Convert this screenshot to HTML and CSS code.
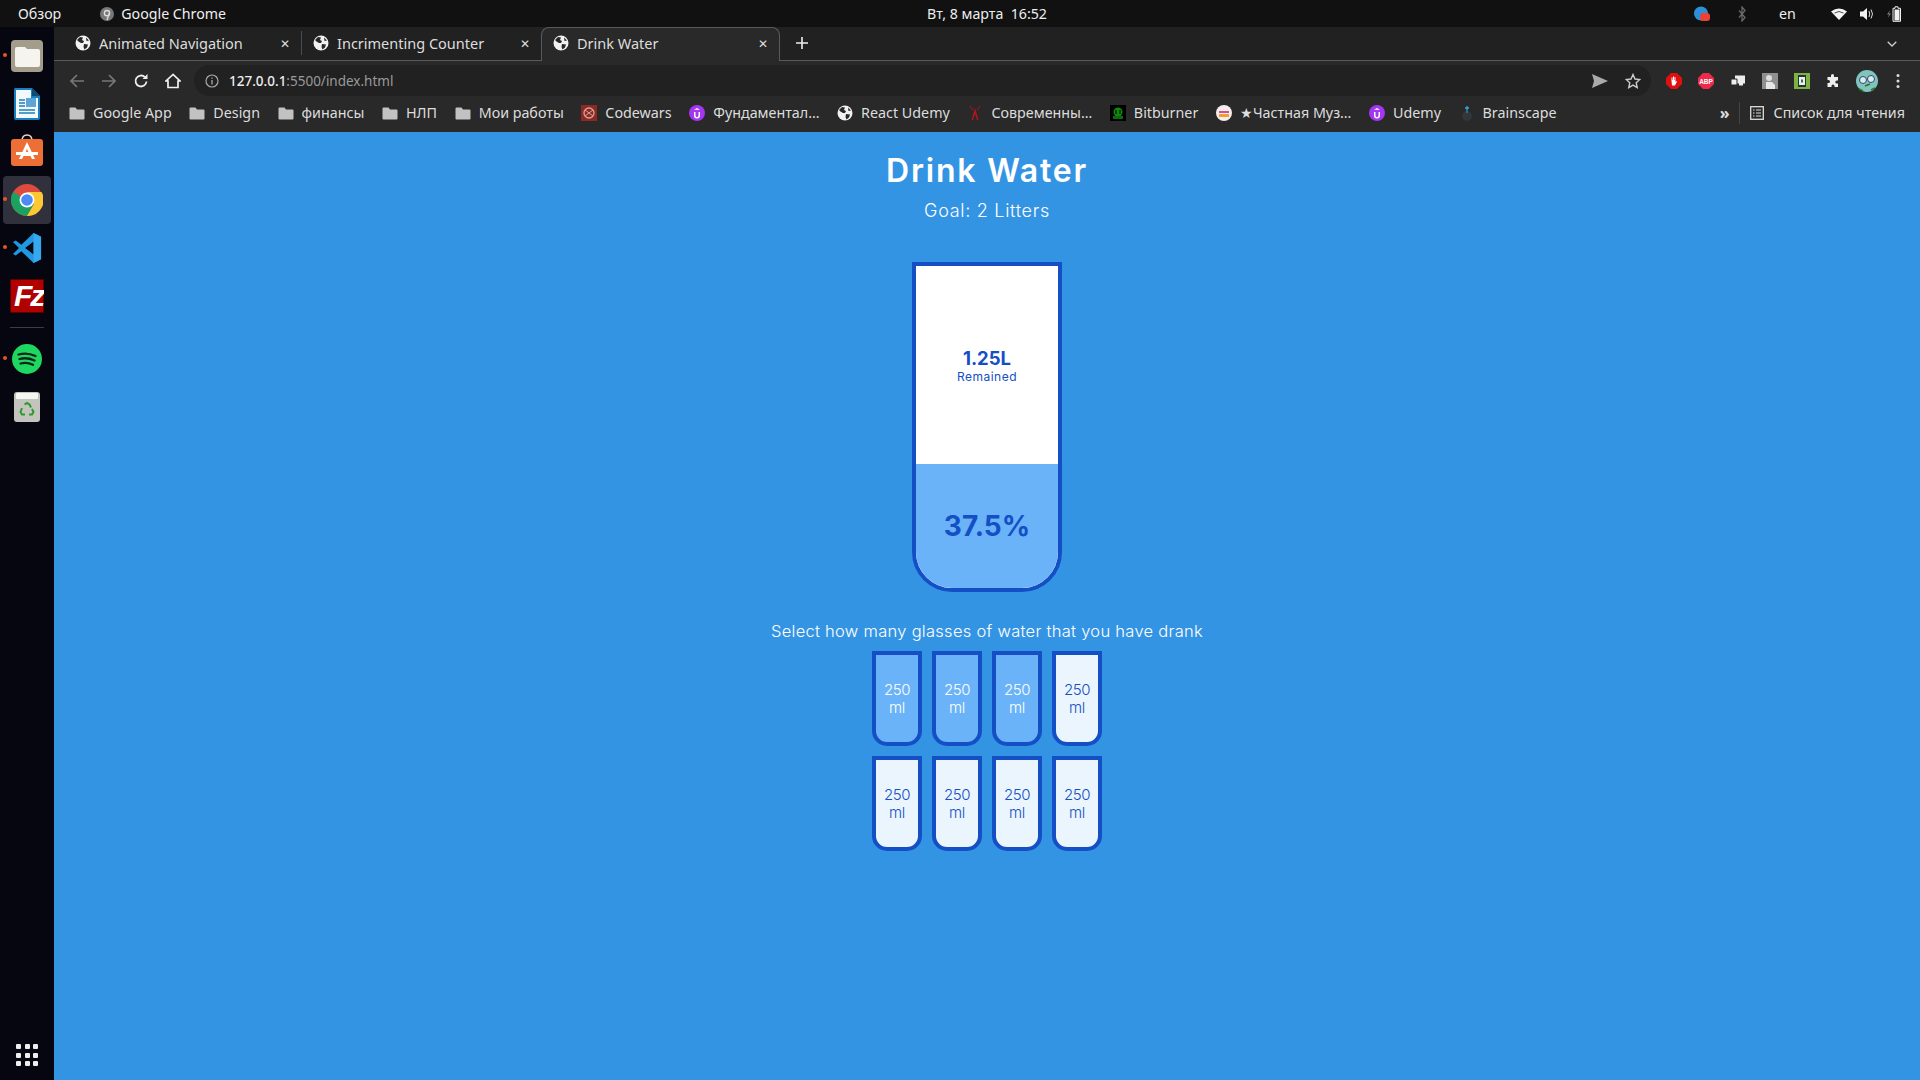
FILE: index.html
```html
<!DOCTYPE html>
<html lang="ru">
<head>
  <meta charset="UTF-8">
  <title>Drink Water</title>
  <link rel="stylesheet" href="styles.css">
</head>
<body>
  <svg class="defs" width="0" height="0">
    <symbol id="globe" viewBox="0 0 16 16">
      <circle cx="8" cy="8" r="7.5" fill="#f1f1f1"/>
      <path d="M2 5l3-3 3 .5-1 2.500 2 1-1 2H6L3.500 6.500zM9 9l4 .5-1 3-2.500 2-1-2.500zM11 2.500l3 3-2.500.5z" fill="#26272a"/>
    </symbol>
    <symbol id="folder" viewBox="0 0 16 16">
      <path d="M1 2.500h5.500L8 4.500h6.500a1 1 0 0 1 1 1v8a1 1 0 0 1-1 1h-13a1 1 0 0 1-1-1v-10a1 1 0 0 1 1-1z" fill="#c2c2c2"/>
    </symbol>
    <symbol id="udemy" viewBox="0 0 16 16">
      <circle cx="8" cy="8" r="8" fill="#a435f0"/>
      <path d="M5 7v3.500a3 3 0 0 0 6 0V7h-1.500v3.500a1.500 1.500 0 0 1-3 0V7zM8 3l3 1.800H5z" fill="#fff"/>
    </symbol>
  </svg>

  <header class="topbar">
    <span class="top-item">Обзор</span>
    <span class="top-app">
      <svg class="ic14" viewBox="0 0 16 16"><circle cx="8" cy="8" r="8" fill="#77787a"/><circle cx="8" cy="7" r="3" fill="none" stroke="#ddd" stroke-width="1.500"/><path d="M10.500 7.500L8 15" stroke="#ddd" stroke-width="1.500"/></svg>
      Google Chrome
    </span>
    <span class="top-date">Вт, 8 марта&nbsp; 16:52</span>
    <div class="tray">
      <svg class="tray-blob" viewBox="0 0 16 16"><circle cx="7" cy="7.500" r="7" fill="#2b90d9"/><rect x="6" y="7" width="10" height="8" rx="3" fill="#ea4335"/></svg>
      <svg class="tray-bt" viewBox="0 0 8 16"><path d="M1 4.500l6 7L4 15V1l3 3.500-6 7" fill="none" stroke="#66686b" stroke-width="1.300"/></svg>
      <span class="tray-lang">en</span>
      <svg class="tray-wifi" viewBox="0 0 16 12"><path d="M0 3.500Q8-2.500 16 3.500L8 12z" fill="#f5f5f5"/><path d="M3.500 5Q8 2 12.500 5" stroke="#222" fill="none" stroke-width=".8"/></svg>
      <svg class="tray-vol" viewBox="0 0 14 14"><path d="M0 4.500h3L7 1v12L3 9.500H0z" fill="#f2f2f2"/><path d="M9 4q1.500 3 0 6M11 2.500q3 4.500 0 9" stroke="#ddd" fill="none"/></svg>
      <svg class="tray-bat" viewBox="0 0 15 16"><path d="M3 4L0 8.500h2L1 12l3-4.500H2z" fill="#777"/><path d="M8 .8h3v1.500h2.500v13H6v-13H8z" fill="none" stroke="#f2f2f2"/><rect x="7.500" y="3.500" width="5" height="11" fill="#f2f2f2"/></svg>
    </div>
  </header>

  <div class="desktop">
    <nav class="dock">
      <div class="dock-item running">
        <svg class="ic32" viewBox="0 0 32 32"><rect width="32" height="32" rx="4" fill="#a49d8b"/><path d="M4 9q0-2 2-2h8l2 2h11q2 0 2 2v14q0 2-2 2H6q-2 0-2-2z" fill="#f6f4ef"/></svg>
      </div>
      <div class="dock-item">
        <svg class="ic32" viewBox="0 0 32 32"><path d="M4 0h17l8 8v22q0 2-2 2H5q-2 0-2-2V1z" fill="#1a7fc0"/><path d="M5 2h15v8h7v20H5z" fill="#f4f8fb"/><path d="M21 0l8 8h-8z" fill="#0c4d78"/><path d="M8 12h6M8 15h6M8 18h6M8 22h16M8 25h16" stroke="#1a7fc0" stroke-width="1.500"/><path d="M15 10h10v9H15z" fill="#5ea5d6"/></svg>
      </div>
      <div class="dock-item">
        <svg class="ic32 bag" viewBox="0 0 32 32"><path d="M11 7q0-6 5-6t5 6" fill="none" stroke="#e8d9c8" stroke-width="1.500"/><rect y="5" width="32" height="27" rx="3" fill="#ee6f35"/><path d="M16 8l8 17h-3l-1.500-3h-7L11 25H8zM14.500 19h3L16 14.500z" fill="#fff"/><rect x="5" y="18" width="22" height="3" fill="#fff"/></svg>
      </div>
      <div class="dock-item running active">
        <svg class="ic32" viewBox="0 0 32 32"><circle cx="16" cy="16" r="16" fill="#dd4b3e"/><path d="M16 16L2.200 8A16 16 0 0 0 16 32l7-12z" fill="#1ba261"/><path d="M16 8h14.500A16 16 0 0 1 16 32l7-12z" fill="#fcc934"/><circle cx="16" cy="16" r="7.500" fill="#fff"/><circle cx="16" cy="16" r="5.800" fill="#4b8bf5"/></svg>
      </div>
      <div class="dock-item running">
        <svg class="ic30" viewBox="0 0 32 32"><path d="M23 0L10 12.500 4 8 1 9.500 7.500 16 1 22.500 4 24l6-4.500L23 32l8-4V4zM23 9v14l-9-7z" fill="#2196e3"/><path d="M23 0l8 4v24l-8 4V23V9z" fill="#35a8ee"/></svg>
      </div>
      <div class="dock-item">
        <svg class="ic34" viewBox="0 0 34 34"><rect x=".5" y=".5" width="33" height="33" fill="#b00000" stroke="#5c0000" stroke-dasharray="2 1"/><text class="fz" x="4" y="27">Fz</text></svg>
      </div>
      <hr class="dock-sep">
      <div class="dock-item running">
        <svg class="ic30" viewBox="0 0 30 30"><circle cx="15" cy="15" r="15" fill="#1ed760"/><path d="M6.500 10.500q8.500-2.500 17 1.500M7.500 15q7.500-2 15 1.500M8.500 19.500q6.500-1.800 12.500 1.200" fill="none" stroke="#12271a" stroke-width="2.300" stroke-linecap="round"/></svg>
      </div>
      <div class="dock-item">
        <svg class="ic30" viewBox="0 0 26 30"><rect width="26" height="30" rx="3" fill="#c4c4bf"/><rect x="2" y="1" width="22" height="6" rx="1" fill="#f6f6f3"/><path d="M10.500 12.500L13 11l2.500 1.500 1.500 3M8 16l-1.500 4 1.500 2.500h3M15 22.500h3l1.500-2.500-1.500-3" fill="none" stroke="#2f9a2c" stroke-width="2"/></svg>
      </div>
      <div class="dock-grid">
        <i></i><i></i><i></i><i></i><i></i><i></i><i></i><i></i><i></i>
      </div>
    </nav>

    <div class="window">
      <div class="tabstrip">
        <div class="tab">
          <svg class="ic16"><use href="#globe"/></svg>
          <span class="tab-title">Animated Navigation</span>
          <span class="tab-close">✕</span>
        </div>
        <div class="tab tab-sep">
          <svg class="ic16"><use href="#globe"/></svg>
          <span class="tab-title">Incrimenting Counter</span>
          <span class="tab-close">✕</span>
        </div>
        <div class="tab tab-active">
          <svg class="ic16"><use href="#globe"/></svg>
          <span class="tab-title">Drink Water</span>
          <span class="tab-close">✕</span>
        </div>
        <svg class="tab-new" viewBox="0 0 12 12"><path d="M6 0v12M0 6h12" stroke="#eee" stroke-width="1.600"/></svg>
        <svg class="tab-more" viewBox="0 0 10 6"><path d="M.7.7L5 5 9.300.7" fill="none" stroke="#ccc" stroke-width="1.300"/></svg>
      </div>

      <div class="toolbar">
        <svg class="nav" viewBox="0 0 16 16"><path d="M15 8H2M8 2L2 8l6 6" fill="none" stroke="#777" stroke-width="1.700"/></svg>
        <svg class="nav" viewBox="0 0 16 16"><path d="M1 8h13M8 2l6 6-6 6" fill="none" stroke="#777" stroke-width="1.700"/></svg>
        <svg class="nav" viewBox="0 0 16 16"><path d="M13.500 8.500a5.500 5.500 0 1 1-1.600-4.400" fill="none" stroke="#eee" stroke-width="1.800"/><path d="M14.500 1v5h-5z" fill="#eee"/></svg>
        <svg class="nav" viewBox="0 0 16 16"><path d="M8 1.500L1 8h2v6.500h10V8h2z" fill="none" stroke="#f2f2f2" stroke-width="1.700"/></svg>
        <div class="omnibox">
          <svg class="ic14" viewBox="0 0 14 14"><circle cx="7" cy="7" r="6" fill="none" stroke="#aaa" stroke-width="1.200"/><path d="M7 6v4.500M7 3.500v1.300" stroke="#aaa" stroke-width="1.300"/></svg>
          <span class="url"><b>127.0.0.1</b>:5500/index.html</span>
          <svg class="omni-send" viewBox="0 0 16 14"><path d="M0 0l16 7-16 7 2-7z" fill="#aaa"/></svg>
          <svg class="omni-star" viewBox="0 0 16 16"><path d="M8 1.500l2 4.500 4.800.5-3.600 3.200 1 4.800L8 12.100l-4.200 2.400 1-4.800L1.200 6.500 6 6z" fill="none" stroke="#ccc" stroke-width="1.400"/></svg>
        </div>
        <div class="extensions">
          <svg class="ic16" viewBox="0 0 16 16"><path d="M5 0h6l5 5v6l-5 5H5l-5-5V5z" fill="#e01010"/><path d="M5.500 8V4.500h1V7h.5V3.500h1V7h.5V4h1v5l1-1 .5.500-2 4H6z" fill="#fff"/></svg>
          <svg class="ic16" viewBox="0 0 16 16"><path d="M5 0h6l5 5v6l-5 5H5l-5-5V5z" fill="#ee2a4a"/><text class="abp" x="8" y="10.500">ABP</text></svg>
          <svg class="ic16" viewBox="0 0 16 16"><path d="M5 2.500h10v8h-2v2H9v-2H5z" fill="#eee"/><path d="M1 6h6v6H1z" fill="#eee" stroke="#292929"/></svg>
          <svg class="ic16" viewBox="0 0 16 16"><rect width="16" height="16" fill="#8f8f8f"/><circle cx="7" cy="5" r="3" fill="#ddd"/><path d="M4 16V9h6l3 3v4z" fill="#e6e6e6"/></svg>
          <svg class="ic16" viewBox="0 0 16 16"><rect width="16" height="16" fill="#7cb342"/><rect x="4" y="2" width="8" height="12" fill="#263238"/><rect x="5" y="4" width="6" height="8" fill="#eceff1"/><rect x="7" y="6.500" width="2" height="3" fill="#2e7d32"/></svg>
          <svg class="ic14" viewBox="0 0 14 14"><path d="M5 1.500a1.500 1.500 0 0 1 3 0V3h4v3.500h-1.200a1.500 1.500 0 0 0 0 3H12V13H8.500v-1a1.500 1.500 0 0 0-3 0v1H1.500V9h1a1.500 1.500 0 0 0 0-3h-1V3H5z" fill="#eee"/></svg>
          <svg class="ic22" viewBox="0 0 22 22"><circle cx="11" cy="11" r="11" fill="#7fc4bd"/><circle cx="7" cy="10" r="3.500" fill="#dfe9f2" stroke="#2a4a6a"/><circle cx="15" cy="9" r="3.500" fill="#dfe9f2" stroke="#2a4a6a"/><path d="M9 16l5-2M3 19l4 2M15 20l4-2" stroke="#2f6f2a" stroke-width="1.500"/></svg>
          <svg class="ext-dots" viewBox="0 0 4 16"><circle cx="2" cy="2.500" r="1.500" fill="#ddd"/><circle cx="2" cy="8" r="1.500" fill="#ddd"/><circle cx="2" cy="13.500" r="1.500" fill="#ddd"/></svg>
        </div>
      </div>

      <div class="bookmarks">
        <a class="bm"><svg class="ic16"><use href="#folder"/></svg>Google App</a>
        <a class="bm"><svg class="ic16"><use href="#folder"/></svg>Design</a>
        <a class="bm"><svg class="ic16"><use href="#folder"/></svg>финансы</a>
        <a class="bm"><svg class="ic16"><use href="#folder"/></svg>НЛП</a>
        <a class="bm"><svg class="ic16"><use href="#folder"/></svg>Мои работы</a>
        <a class="bm"><svg class="ic16" viewBox="0 0 16 16"><rect width="16" height="16" fill="#8a2a22"/><circle cx="8" cy="8" r="5" fill="none" stroke="#d9a09a" stroke-width="1.300"/><path d="M4 5l8 6M12 5l-8 6" stroke="#d9a09a"/></svg>Codewars</a>
        <a class="bm"><svg class="ic16"><use href="#udemy"/></svg>Фундаментал…</a>
        <a class="bm"><svg class="ic16"><use href="#globe"/></svg>React Udemy</a>
        <a class="bm"><svg class="ic16" viewBox="0 0 16 16"><path d="M8 3L4.500 15h1.500L8 9l2 6h1.500z" fill="#b3141c"/><path d="M3 1l3 4M13 1l-3 4" stroke="#b3141c"/></svg>Современны…</a>
        <a class="bm"><svg class="ic16" viewBox="0 0 16 16"><rect width="16" height="16" fill="#000"/><circle cx="8" cy="7" r="4.500" fill="#0c8a0c"/><path d="M3 11h10v3H3z" fill="#0c6a0c"/><path d="M6 5v4M10 5v4" stroke="#000"/></svg>Bitburner</a>
        <a class="bm"><svg class="ic16" viewBox="0 0 16 16"><circle cx="8" cy="8" r="8" fill="#f5ecec"/><path d="M3 6h10v2H3z" fill="#d64d8a"/><path d="M3 9h10v3H3z" fill="#f0a030"/></svg>★Частная Муз…</a>
        <a class="bm"><svg class="ic16"><use href="#udemy"/></svg>Udemy</a>
        <a class="bm"><svg class="ic16" viewBox="0 0 16 16"><circle cx="8" cy="11" r="5" fill="#33363a"/><path d="M8 1v4M6 3h4" stroke="#2fa8e0" stroke-width="1.300"/><path d="M8 5v3" stroke="#2fa8e0"/></svg>Brainscape</a>
        <span class="bm-more">»</span>
        <span class="bm-sep"></span>
        <a class="bm bm-list"><svg class="ic14" viewBox="0 0 14 14"><rect x=".7" y=".7" width="12.600" height="12.600" fill="none" stroke="#ddd" stroke-width="1.300"/><path d="M3 4h1.500M6 4h5M3 7h1.500M6 7h5M3 10h1.500M6 10h5" stroke="#ddd" stroke-width="1.200"/></svg>Список для чтения</a>
      </div>

      <main class="page">
        <h1>Drink Water</h1>
        <h3 class="goal">Goal: 2 Litters</h3>

        <div class="cup">
          <div class="remained">
            <span class="liters">1.25L</span>
            <small>Remained</small>
          </div>
          <div class="percentage">37.5%</div>
        </div>

        <p class="text">Select how many glasses of water that you have drank</p>

        <div class="cups">
          <div class="cup-small full">250 ml</div>
          <div class="cup-small full">250 ml</div>
          <div class="cup-small full">250 ml</div>
          <div class="cup-small">250 ml</div>
          <div class="cup-small">250 ml</div>
          <div class="cup-small">250 ml</div>
          <div class="cup-small">250 ml</div>
          <div class="cup-small">250 ml</div>
        </div>
      </main>
    </div>
  </div>
</body>
</html>
```

FILE: styles.css
```css
* { box-sizing: border-box; }
html, body { height: 100%; }
body { margin: 0; background: #05060f; color: #fff; font-family: "Noto Sans", sans-serif; overflow: hidden; }
svg { display: block; flex: none; }
.defs { position: absolute; }

.ic14 { width: 14px; height: 14px; }
.ic16 { width: 16px; height: 16px; }
.ic22 { width: 22px; height: 22px; }
.ic30 { width: 30px; height: 30px; }
.ic32 { width: 32px; height: 32px; }
.ic34 { width: 34px; height: 34px; }

/* ubuntu top bar */
.topbar { height: 27px; background: #111; display: flex; align-items: center; padding-left: 18px; font-size: 14.2px; color: #eee; }
.top-app { display: flex; align-items: center; gap: 7px; margin-left: 39px; }
.top-date { margin-left: 701px; }
.tray { margin-left: auto; display: flex; align-items: center; }
.tray-blob { width: 16px; height: 16px; }
.tray-bt { width: 8px; height: 16px; margin-left: 28px; }
.tray-lang { margin-left: 33px; width: 16px; }
.tray-wifi { width: 16px; height: 12px; margin-left: 36px; }
.tray-vol { width: 14px; height: 14px; margin-left: 13px; }
.tray-bat { width: 15px; height: 16px; margin: 0 18px 0 13px; }

.desktop { display: flex; height: 1053px; }

/* dock */
.dock { width: 54px; flex: none; background: #05060f; display: flex; flex-direction: column; align-items: center; padding-top: 5px; }
.dock-item { width: 48px; height: 48px; flex: none; display: flex; align-items: center; justify-content: center; position: relative; border-radius: 4px; }
.dock-item.active { background: #30313d; }
.dock-item.running::before { content: ""; position: absolute; left: 0; top: 21px; width: 4px; height: 4px; border-radius: 50%; background: #e95420; }
.bag { margin-top: -4px; }
.dock-sep { width: 34px; height: 1px; margin: 7px 0 7px; border: 0; background: #3b3c47; flex: none; }
.fz { font: italic bold 30px "Liberation Sans", sans-serif; fill: #fff; letter-spacing: -2px; }
.dock-grid { margin-top: auto; margin-bottom: 14px; display: grid; grid-template-columns: repeat(3, 5px); gap: 3.500px; }
.dock-grid i { width: 5px; height: 5px; background: #eee; border-radius: 1px; }

.window { flex: 1; display: flex; flex-direction: column; min-width: 0; }

/* chrome */
.tabstrip { height: 34px; flex: none; background: #212121; border-bottom: 1px solid #5a5a5a; display: flex; padding-left: 21px; font-size: 14.5px; color: #ddd; position: relative; }
.tab { width: 226px; height: 32px; display: flex; align-items: center; gap: 8px; }
.tab-sep { width: 240px; border-left: 1px solid #4c4c4c; padding-left: 11px; height: 24px; margin-top: 4px; }
.tab-title { flex: 1; white-space: nowrap; overflow: hidden; }
.tab-close { font-size: 12px; width: 10px; margin-right: 11px; color: #ddd; text-align: center; }
.tab-active { width: 239px; height: 34px; background: #292929; border-radius: 8px 8px 0 0; border: 1px solid #5a5a5a; border-bottom: 0; padding: 0 0 3px 11px; }
.tab-new { width: 12px; height: 12px; margin: 10px 0 0 16px; }
.tab-more { width: 10px; height: 6px; position: absolute; right: 23px; top: 14px; }

.toolbar { height: 35px; flex: none; background: #292929; display: flex; align-items: center; padding: 4px 0 0 15px; }
.nav { width: 16px; height: 16px; margin-right: 16px; }
.omnibox { width: 1457px; height: 31px; margin-left: -3px; background: #212121; border-radius: 16px; display: flex; align-items: center; padding: 0 10px 0 11px; font-size: 13.5px; }
.url { margin-left: 10px; color: #9a9a9a; flex: 1; }
.url b { color: #eee; font-weight: 500; }
.omni-send { width: 16px; height: 14px; }
.omni-star { width: 16px; height: 16px; margin-left: 17px; }
.extensions { display: flex; align-items: center; gap: 16px; margin-left: 15px; }
.abp { font: bold 6.500px "Liberation Sans", sans-serif; fill: #fff; text-anchor: middle; }
.ext-dots { width: 4px; height: 16px; margin-left: 2px; }

.bookmarks { height: 36px; flex: none; background: #292929; display: flex; align-items: center; padding: 0 0 3px 15px; font-size: 14.3px; color: #ddd; }
.bm { display: flex; align-items: center; gap: 8px; margin-right: 17.6px; white-space: nowrap; }
.bm-more { margin-left: auto; font-weight: 700; font-size: 16px; }
.bm-sep { width: 1px; height: 22px; margin: 0 10px 0 10px; background: #444; }
.bm-list { margin-right: 15px; gap: 9px; }

/* page */
.page { flex: 1; background: #3494e4; display: flex; flex-direction: column; align-items: center; font-family: Inter, sans-serif; }
h1 { margin: 19px 0 0; font-size: 32px; line-height: 40px; font-weight: 600; letter-spacing: 1.8px; }
.goal { margin: 9px 0 0; font-size: 18px; line-height: 22px; font-weight: 300; letter-spacing: 0.7px; }

.cup { width: 150px; height: 330px; margin-top: 40px; border: 4px solid #144fc6; border-radius: 0 0 40px 40px; background: #fff; display: flex; flex-direction: column; overflow: hidden; }
.remained { flex: 1; display: flex; flex-direction: column; align-items: center; justify-content: center; color: #144fc6; }
.liters { font-size: 18.5px; line-height: 24px; font-weight: 700; }
.remained small { font-size: 12px; line-height: 14px; letter-spacing: 0.5px; }
.percentage { height: 124px; flex: none; background: #6ab3f8; color: #144fc6; display: flex; align-items: center; justify-content: center; font-size: 28px; font-weight: 700; }

.text { margin: 29px 0 0; font-size: 16.5px; line-height: 20px; letter-spacing: 0.28px; font-weight: 300; }
.cups { width: 240px; margin-top: 10px; display: flex; flex-wrap: wrap; gap: 10px; justify-content: center; }
.cup-small { width: 50px; height: 95px; background: rgba(255, 255, 255, 0.9); border: 4px solid #144fc6; border-radius: 0 0 15px 15px; color: #144fc6; font-size: 15px; font-weight: 300; line-height: 18px; letter-spacing: -0.4px; display: flex; align-items: center; justify-content: center; text-align: center; }
.cup-small.full { background: #6ab3f8; color: #fff; }
```
